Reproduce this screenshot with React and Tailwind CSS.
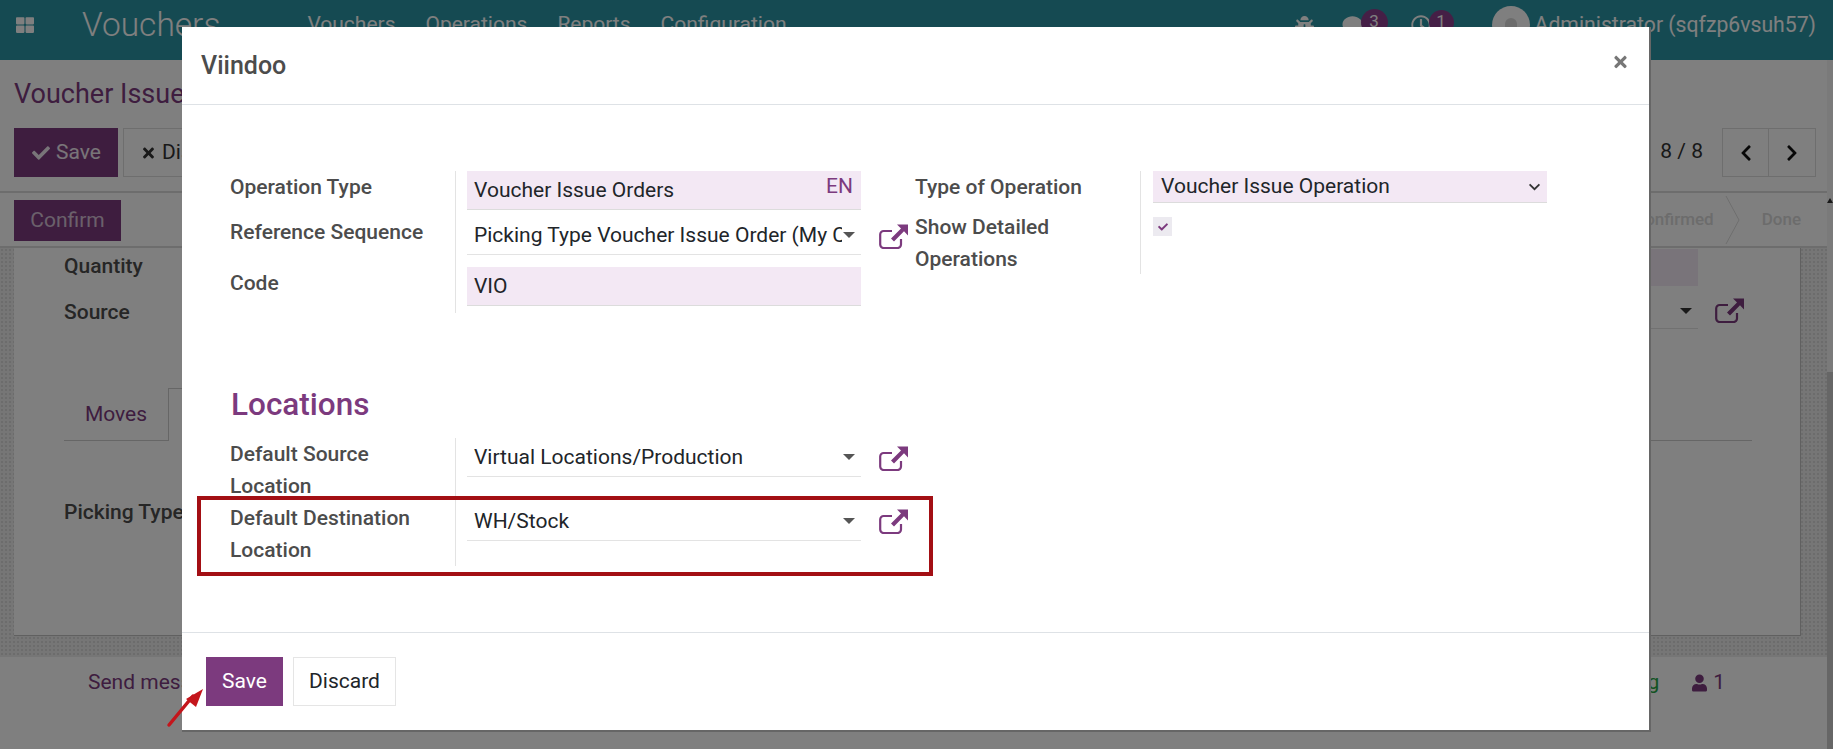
import React from 'react';
import {
  FaThLarge, FaBug, FaComment, FaRegClock, FaCheck, FaTimes,
  FaChevronLeft, FaChevronRight, FaUser,
} from 'react-icons/fa';

const ExternalIcon = ({ className = 'text-[#7c3a7e]' }) => (
  <svg viewBox="0 0 29 25" className={`w-[29px] h-[25px] shrink-0 ${className}`}>
    <path d="M13 7H4.6A3.4 3.4 0 0 0 1.2 10.4v10.2A3.4 3.4 0 0 0 4.6 24h14a3.4 3.4 0 0 0 3.4-3.4V15" fill="none" stroke="currentColor" strokeWidth="2.2" />
    <path d="M18 .5H29V11.5l-4-4.2L15 17.5l-3-3L22 4.4z" fill="currentColor" />
  </svg>
);

const SelectArrow = ({ className = 'text-[#555]' }) => (
  <svg viewBox="0 0 12 6" className={`w-[12px] h-[6px] shrink-0 ${className}`}>
    <path d="M0 0h12L6 6z" fill="currentColor" />
  </svg>
);

const menus = ['Vouchers', 'Operations', 'Reports', 'Configuration'];

const Navbar = () => (
  <div className="h-[60px] shrink-0 bg-[#2b95a4] text-white flex items-center pb-[10px]">
    <FaThLarge className="w-[20px] h-[18px] ml-[15px]" />
    <span className="ml-[47px] text-[33.5px] leading-[50px] font-light">Vouchers</span>
    <div className="flex ml-[87px] gap-[30px] text-[21px]">
      {menus.map((m) => <span key={m}>{m}</span>)}
    </div>
    <div className="ml-auto flex items-center pr-[17px]">
      <FaBug className="w-[19px] h-[19px]" />
      <FaComment className="w-[21px] h-[20px] ml-[28px]" />
      <span className="w-[27px] h-[27px] rounded-full bg-[#8a3f8c] text-[17px] flex items-center justify-center ml-[-2px] mt-[-6px]">3</span>
      <FaRegClock className="w-[20px] h-[20px] ml-[23px]" />
      <span className="w-[25px] h-[25px] rounded-full bg-[#8a3f8c] text-[17px] flex items-center justify-center ml-[-2px] mt-[-6px]">1</span>
      <div className="w-[38px] h-[38px] rounded-full bg-white flex items-center justify-center ml-[38px]">
        <div className="w-[12px] h-[20px] rounded-[6px] bg-[#d8d8d8] mt-[6px]" />
      </div>
      <span className="ml-[5px] text-[21.2px]">Administrator (sqfzp6vsuh57)</span>
    </div>
  </div>
);

const ControlPanel = () => (
  <div className="h-[188px] shrink-0 bg-white flex flex-col">
    <div className="h-[68px] shrink-0 pl-[14px] flex items-center text-[27px] text-[#7c3a7e]">Voucher Issue Orders</div>
    <div className="h-[65px] shrink-0 flex pl-[14px] border-b-2 border-[#dadada]">
      <button className="w-[104px] h-[49px] pl-[18px] bg-[#7c3a7e] text-white/90 text-[21px] flex items-center gap-[6px]">
        <FaCheck className="w-[18px] h-[18px]" />Save
      </button>
      <button className="ml-[5px] w-[120px] h-[49px] pl-[17px] border border-[#ddd] text-[21px] text-[#333] flex items-center gap-[6px]">
        <FaTimes className="w-[15px] h-[16px]" />Discard
      </button>
      <div className="ml-auto flex items-start text-[21px] text-[#333] pr-[11px]">
        <span className="mt-[8px] mr-[19px]">8 / 8</span>
        <div className="flex border border-[#ddd] h-[49px]">
          <span className="w-[46px] flex items-center justify-center border-r border-[#ddd]"><FaChevronLeft className="w-[18px] h-[18px] text-[#111]" /></span>
          <span className="w-[46px] flex items-center justify-center"><FaChevronRight className="w-[18px] h-[18px] text-[#111]" /></span>
        </div>
      </div>
    </div>
    <div className="flex-1 min-h-0 flex pl-[14px] border-b-2 border-[#dadada]">
      <button className="w-[107px] h-[41px] mt-[7px] bg-[#7c3a7e] text-white/70 text-[21px]">Confirm</button>
      <div className="ml-auto flex items-center text-[17px] font-medium text-[#d8d8d8] pr-[26px]">
        <span>Confirmed</span>
        <svg viewBox="0 0 15 48" className="w-[15px] h-[48px] ml-[11px] mr-[22px] text-[#dcdcdc]"><path d="M1 0l13 24L1 48" fill="none" stroke="currentColor" /></svg>
        <span>Done</span>
      </div>
    </div>
  </div>
);

const Sheet = () => (
  <div className="w-[1787px] h-[388px] bg-white border-b border-r border-[#c0c0c0] pl-[50px] pr-[56px] text-[21px] text-[#4c4c4c]">
    <div className="flex items-center h-[38px] font-medium">
      <span>Quantity</span>
      <div className="ml-auto mr-[46px] w-[300px] h-[37px] bg-[#f3e8f4]" />
    </div>
    <div className="flex items-center h-[54px] font-medium">
      <span>Source</span>
      <div className="ml-auto w-[300px] h-[36px] mt-[-4px] pr-[6px] flex items-center justify-end border-b border-[#e3e3e3]">
        <SelectArrow className="text-[#333]" />
      </div>
      <span className="ml-[17px] flex mt-[-5px]"><ExternalIcon /></span>
    </div>
    <div className="mt-[48px] h-[53px] w-[1688px] flex border-b border-[#ccc]">
      <span className="w-[104px] h-[53px] pt-[1px] flex items-center justify-center text-[#7c3a7e]">Moves</span>
      <span className="w-[100px] h-[53px] border-l border-t border-r border-[#ccc] bg-white" />
    </div>
    <div className="mt-[58px] font-medium leading-[26px]">Picking Type</div>
  </div>
);

const Chatter = () => (
  <div className="h-[92px] mt-[21px] bg-white pl-[88px] pr-[102px] pt-[10px] flex items-start text-[21px]">
    <span className="text-[#7c3a7e]">Send message</span>
    <div className="ml-auto flex items-center">
      <span className="text-[#28a745]">Following</span>
      <FaUser className="w-[15px] h-[18px] ml-[33px] text-[#7c3a7e]" />
      <span className="ml-[6px] text-[#7c3a7e]">1</span>
    </div>
  </div>
);

const Label = ({ children }) => (
  <div className="text-[21px] leading-[32px] font-medium text-[#4c4c4c]">{children}</div>
);

const FieldRow = ({ label, rowClass, labelClass = '', children, iconClass }) => (
  <div className={`flex ${rowClass}`}>
    <div className={`w-[225px] shrink-0 pr-[10px] ${labelClass}`}><Label>{label}</Label></div>
    <div className="w-[407px] shrink-0 border-l border-[#e3e3e3] pl-[11px] flex items-start">
      <div className="w-[394px] shrink-0">{children}</div>
      {iconClass && <span className={`ml-[18px] flex shrink-0 ${iconClass}`}><ExternalIcon /></span>}
    </div>
  </div>
);

const TextInput = ({ children, lang }) => (
  <div className="h-[39px] bg-[#f3e8f4] border-b border-[#dcdcdc] pl-[7px] pr-[8px] flex justify-between text-[21px] text-[#212529]">
    <span className="pt-[4px]">{children}</span>
    {lang && <span className="text-[#7c3a7e]">{lang}</span>}
  </div>
);

const M2OInput = ({ children }) => (
  <div className="h-[39px] border-b border-[#e3e3e3] pl-[7px] pr-[6px] flex items-center text-[21px] text-[#212529]">
    <span className="flex-1 min-w-0 overflow-hidden whitespace-nowrap pt-[2px]">{children}</span>
    <SelectArrow className="text-[#555] ml-[1px]" />
  </div>
);

const Modal = () => (
  <div className="absolute left-[182px] top-[27px] w-[1467px] h-[703px] bg-white flex flex-col shadow-[1px_1px_0_1px_#666]">
    <div className="h-[78px] shrink-0 border-b border-[#dee2e6] px-[19px] flex items-center justify-between">
      <span className="text-[25px] font-medium text-[#4c4c4c]">Viindoo</span>
      <FaTimes className="w-[17px] h-[18px] text-[#777] mr-[1px] mt-[-8px]" />
    </div>

    <div className="flex-1 pl-[48px] pt-[66px] relative">
      <div className="flex">
        <div className="w-[632px] shrink-0">
          <FieldRow label="Operation Type" rowClass="h-[40px]">
            <TextInput lang="EN">Voucher Issue Orders</TextInput>
          </FieldRow>
          <FieldRow label="Reference Sequence" rowClass="h-[56px]" labelClass="pt-[5px]" iconClass="mt-[13px]">
            <div className="pt-[5px]">
              <M2OInput>Picking Type Voucher Issue Order (My Company)</M2OInput>
            </div>
          </FieldRow>
          <FieldRow label="Code" rowClass="h-[46px]">
            <TextInput>VIO</TextInput>
          </FieldRow>
        </div>
        <div className="ml-[53px]">
          <div className="flex h-[40px]">
            <div className="w-[225px]"><Label>Type of Operation</Label></div>
            <div className="border-l border-[#e3e3e3] pl-[12px]">
              <div className="w-[394px] h-[32px] bg-[#f3e8f4] border-b border-[#dcdcdc] pl-[8px] pr-[6px] flex items-center justify-between text-[21px] text-[#212529]">
                <span className="pt-[1px]">Voucher Issue Operation</span>
                <svg viewBox="0 0 14 9" className="w-[13px] h-[8px] text-[#333]"><path d="M1.5 1.5L7 7l5.5-5.5" fill="none" stroke="currentColor" strokeWidth="2" /></svg>
              </div>
            </div>
          </div>
          <div className="flex h-[63px]">
            <div className="w-[225px] pr-[40px]"><Label>Show Detailed Operations</Label></div>
            <div className="border-l border-[#e3e3e3] pl-[12px] pt-[6px]">
              <div className="w-[19px] h-[19px] bg-[#eceaf0] flex items-center justify-center">
                <FaCheck className="w-[10px] h-[10px] text-[#7c3a7e]" />
              </div>
            </div>
          </div>
        </div>
      </div>

      <h2 className="mt-[70px] ml-[1px] text-[31.5px] leading-[44px] font-medium text-[#7c3a7e]">Locations</h2>
      <div className="mt-[11px]">
        <FieldRow label="Default Source Location" rowClass="h-[64px]" iconClass="mt-[8px]">
          <M2OInput>Virtual Locations/Production</M2OInput>
        </FieldRow>
        <FieldRow label="Default Destination Location" rowClass="h-[64px]" iconClass="mt-[7px]">
          <M2OInput>WH/Stock</M2OInput>
        </FieldRow>
      </div>

      <div className="absolute left-[15px] top-[391px] w-[736px] h-[80px] border-[4px] border-[#a30f14]" />
    </div>

    <div className="h-[98px] shrink-0 border-t border-[#dee2e6] pl-[24px] pt-[24px] flex gap-[10px]">
      <button className="w-[77px] h-[49px] pt-[1px] bg-[#7c3a7e] text-white text-[21px]">Save</button>
      <button className="w-[103px] h-[49px] pt-[1px] border border-[#e5e5e5] text-[#212529] text-[21px]">Discard</button>
    </div>
  </div>
);

export default function App() {
  return (
    <div className="relative w-full h-[749px] overflow-hidden bg-white font-[Roboto,sans-serif]">
      <div className="h-full flex flex-col">
        <Navbar />
        <div className="flex-1 min-h-0 flex">
          <div className="w-[1827px] flex flex-col">
            <ControlPanel />
            <div className="flex-1 min-h-0 pl-[14px] bg-[#ececec] bg-[radial-gradient(#d8d8d8_1px,transparent_1px)] bg-[length:4px_4px]">
              <Sheet />
              <div className="ml-[-14px]"><Chatter /></div>
            </div>
          </div>
          <div className="flex-1 flex flex-col bg-[#f5f5f5]">
            <div className="h-[312px] pt-[138px] flex justify-end">
              <svg viewBox="0 0 6 5" className="w-[6px] h-[5px] text-[#333]"><path d="M0 5l3-5 3 5z" fill="currentColor" /></svg>
            </div>
            <div className="flex-1 bg-[#cccccc]" />
          </div>
        </div>
      </div>

      <div className="absolute inset-0 bg-black/50" />
      <Modal />

      <svg viewBox="0 0 50 50" className="absolute left-[162px] top-[684px] w-[50px] h-[50px] text-[#c4161c]">
        <path d="M7 41L31 12" fill="none" stroke="currentColor" strokeWidth="3.5" strokeLinecap="round" />
        <path d="M41 5L24 15l10 8z" fill="currentColor" />
      </svg>
    </div>
  );
}
